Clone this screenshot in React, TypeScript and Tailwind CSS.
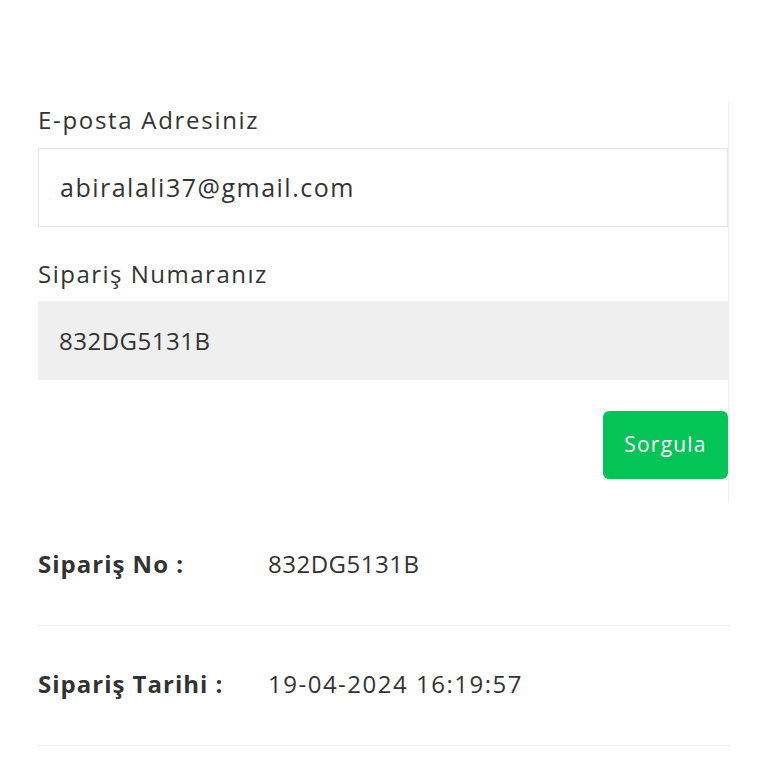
const font = { fontFamily: '"Open Sans", "Noto Sans", sans-serif' }

export default function App() {
  return (
    <div className="w-full min-h-screen bg-white text-[#333] pt-[102px] px-[38px]" style={font}>
      <div className="w-[691px] border-r border-[#efefef] pb-[24px]">
        <label className="block h-[36px] leading-[36px] text-[24px] tracking-[1.7px] mb-[10px]">E-posta Adresiniz</label>
        <div className="h-[79px] border border-[#e4e4e4] flex items-center pl-[21px] text-[25px] tracking-[1.5px]">
          abiralali37@gmail.com
        </div>
        <label className="block h-[36px] leading-[36px] text-[24px] tracking-[1.5px] mt-[29px] mb-[9px]">Sipariş Numaranız</label>
        <div className="h-[79px] bg-[#efefef] flex items-center pl-[21px] text-[24px] tracking-[0.5px]">832DG5131B</div>
        <div className="flex justify-end mt-[31px]">
          <button className="w-[125px] h-[68px] rounded-[6px] bg-[#04c457] text-white text-[21px] tracking-[1.2px]">Sorgula</button>
        </div>
      </div>
      <div className="w-[693px] pt-[3px]">
        <div className="h-[120px] pb-[4px] flex items-center border-b border-[#f0f0f0] text-[24px]">
          <span className="w-[230px] font-bold tracking-[1px]">Sipariş No :</span>
          <span className="tracking-[0.5px]">832DG5131B</span>
        </div>
        <div className="h-[120px] pb-[4px] flex items-center border-b border-[#f0f0f0] text-[24px]">
          <span className="w-[230px] font-bold tracking-[1px]">Sipariş Tarihi :</span>
          <span className="tracking-[1.5px]">19-04-2024 16:19:57</span>
        </div>
      </div>
    </div>
  )
}
